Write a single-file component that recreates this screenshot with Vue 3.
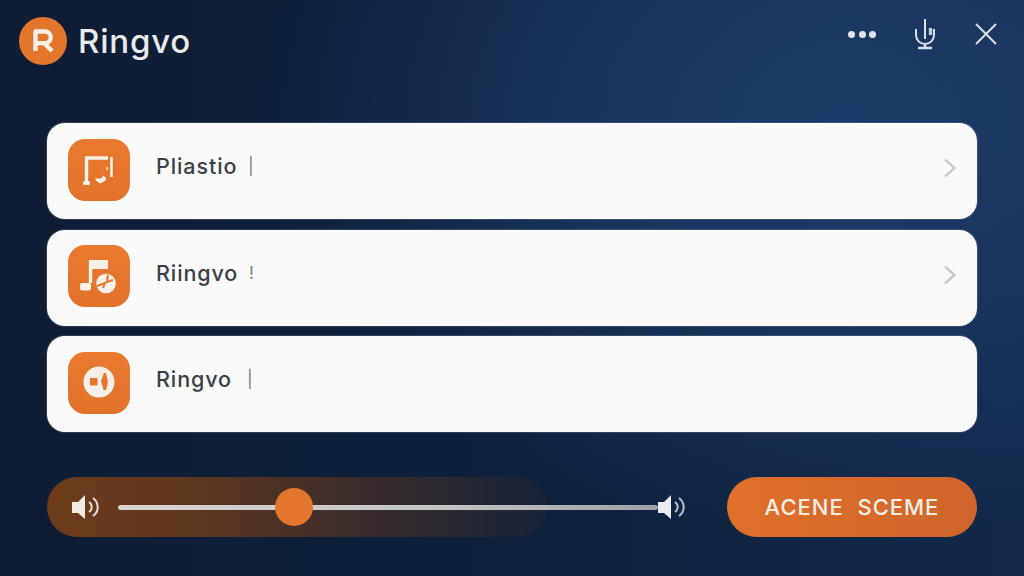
<template>
  <div class="screen">
    <header class="topbar">
      <div class="brand">
        <div class="brand-mark">
          <svg viewBox="0 0 48 48" width="48" height="48" fill="none" stroke="#f7efe8" stroke-width="4.4">
            <path d="M16.500 34V14.500h9.500a5.800 5.800 0 0 1 0 11.600h-9" stroke-linejoin="round" />
            <path d="M25 26l8 8" />
          </svg>
        </div>
        <span class="brand-name">Ringvo</span>
      </div>
      <div class="top-actions">
        <button class="icon-btn dots" aria-label="More">
          <i></i><i></i><i></i>
        </button>
        <button class="icon-btn" aria-label="Microphone">
          <svg viewBox="0 0 24 32" width="24" height="32" fill="none" stroke="#d9e0e8" stroke-width="2">
            <path d="M12 1v20" />
            <path d="M17.500 10v7" stroke-width="3.400" stroke="#c4ccd6" />
            <path d="M3 11v6a9 9 0 0 0 18 0v-6" />
            <path d="M12 26v3M5 30h14" stroke-width="2.400" />
          </svg>
        </button>
        <button class="icon-btn" aria-label="Close">
          <svg viewBox="0 0 24 24" width="24" height="24" stroke="#d9e0e8" stroke-width="2" fill="none">
            <path d="M2 2l20 20M22 2 2 22" />
          </svg>
        </button>
      </div>
    </header>

    <main class="list">
      <div v-for="row in rows" :key="row.id" class="row">
        <div class="row-icon">
          <svg v-if="row.id === 'playlist'" viewBox="0 0 62 62" width="62" height="62" fill="none">
            <path d="M18.500 44V19H40" stroke="#f8f1ea" stroke-width="3.400" />
            <path d="M43.500 18v20" stroke="#f8f1ea" stroke-width="2.600" />
            <rect x="15" y="42" width="7" height="4" rx="1.500" fill="#f8f1ea" />
            <path d="M27 39.500h6l2.500-3 2.500 2.500v2l-3 2-3 1.500-3-2z" fill="#f8f1ea" />
            <rect x="38" y="28" width="2" height="3" fill="#f3c9a8" />
          </svg>
          <svg v-else-if="row.id === 'ringtone'" viewBox="0 0 62 62" width="62" height="62" fill="none">
            <path d="M22.500 38V15" stroke="#f8f1ea" stroke-width="3.400" />
            <path d="M21 15h19v9H21z" fill="#f8f1ea" />
            <rect x="12" y="38" width="11" height="7.500" rx="2" fill="#f8f1ea" />
            <circle cx="38" cy="38.500" r="9.800" fill="#f8f1ea" />
            <path d="M29 41l8-3-2 5M40 30l-1 7 6-2" stroke="#e8762c" stroke-width="2" />
          </svg>
          <svg v-else viewBox="0 0 62 62" width="62" height="62" fill="none">
            <circle cx="31" cy="30" r="15.500" fill="#f6efe9" />
            <rect x="22" y="26" width="7.500" height="7.500" fill="#e8762c" />
            <path d="M33 29l3-8h2l2 9-2 8h-2.500z" fill="#e8762c" />
          </svg>
        </div>
        <span class="row-label">{{ row.label }}</span>
        <span class="row-mark" :style="{ left: row.markX + 'px' }">{{ row.mark }}</span>
        <svg v-if="row.chevron" class="chevron" viewBox="0 0 14 20" width="14" height="20" fill="none" stroke="#c9c9c9" stroke-width="2.400">
          <path d="M2 1.500 11.500 10 2 18.500" />
        </svg>
      </div>
    </main>

    <footer class="controls">
      <div class="volume">
        <svg class="speaker" viewBox="0 0 30 26" width="30" height="26" fill="none">
          <path d="M1 8h6l7-7v24l-7-6H1z" fill="#f1ece7" />
          <path d="M18 8a6 6 0 0 1 0 10M22 4a11 11 0 0 1 0 18" stroke="#e6e0da" stroke-width="2" />
        </svg>
        <div class="track">
          <div class="thumb"></div>
        </div>
        <svg class="speaker speaker-end" viewBox="0 0 30 26" width="30" height="26" fill="none">
          <path d="M1 8h6l7-7v24l-7-6H1z" fill="#e9edf1" />
          <path d="M18 8a6 6 0 0 1 0 10M22 4a11 11 0 0 1 0 18" stroke="#b9c1ca" stroke-width="2" />
        </svg>
      </div>
      <button class="scene-btn">ACENE&nbsp; SCEME</button>
    </footer>
  </div>
</template>

<script setup>
const rows = [
  { id: 'playlist', label: 'Pliastio', mark: '|', markX: 201, chevron: true },
  { id: 'ringtone', label: 'Riingvo', mark: '!', markX: 202, chevron: true },
  { id: 'speaker', label: 'Ringvo', mark: '|', markX: 200, chevron: false }
]
</script>

<style>
html,
body {
  margin: 0;
  background: #0c1a30;
}
</style>

<style scoped>
.screen {
  width: 1024px;
  height: 576px;
  overflow: hidden;
  box-sizing: border-box;
  display: flex;
  flex-direction: column;
  font-family: "Inter", "Liberation Sans", sans-serif;
  background:
    radial-gradient(ellipse 580px 420px at 840px 120px, #1d3a68 0%, rgba(29, 58, 104, 0.7) 45%, rgba(29, 58, 104, 0) 100%),
    linear-gradient(90deg, #0e1d35 0%, #0f213b 50%, #12294a 100%);
}

.topbar {
  height: 81px;
  padding: 0 26px 0 19px;
  display: flex;
  justify-content: space-between;
  align-items: center;
  flex-shrink: 0;
}

.brand {
  display: flex;
  align-items: center;
  gap: 11px;
}

.brand-mark {
  width: 48px;
  height: 48px;
  border-radius: 50%;
  background: #e3762b;
}

.brand-mark svg {
  display: block;
}

.brand-name {
  font-size: 33px;
  font-weight: 500;
  letter-spacing: 0.8px;
  color: #e9ebec;
}

.top-actions {
  display: flex;
  align-items: center;
  gap: 37px;
  margin-top: -13px;
}

.icon-btn {
  background: none;
  border: none;
  padding: 0;
  display: flex;
  align-items: center;
}

.dots {
  gap: 3.5px;
}

.dots i {
  width: 7px;
  height: 7px;
  border-radius: 50%;
  background: #e2e6ea;
}

.list {
  margin-top: 42px;
  padding: 0 47px;
  display: flex;
  flex-direction: column;
  gap: 10.5px;
}

.row {
  position: relative;
  height: 96px;
  box-sizing: border-box;
  padding: 0 20px 3px 21px;
  background: #fafafa;
  border-radius: 18px;
  box-shadow: 0 0 1px 1px rgba(255, 255, 255, 0.15);
  display: flex;
  align-items: center;
}

.row-icon {
  width: 62px;
  height: 62px;
  border-radius: 17px;
  background: linear-gradient(180deg, #e97a2f, #e2712a);
  flex-shrink: 0;
}

.row-icon svg {
  display: block;
}

.row-label {
  margin-left: 26px;
  margin-top: -7px;
  font-size: 21.5px;
  font-weight: 500;
  letter-spacing: 0.9px;
  color: #3b4048;
}

.row-mark {
  position: absolute;
  top: 33px;
  font-size: 17px;
  color: #777b80;
}

.chevron {
  margin-left: auto;
  margin-top: -3px;
}

.controls {
  margin-top: 45px;
  padding: 0 47px;
  display: flex;
  justify-content: space-between;
  align-items: center;
}

.volume {
  position: relative;
  width: 640px;
  height: 60px;
  box-sizing: border-box;
  padding-left: 24px;
  display: flex;
  align-items: center;
}

.volume::before {
  content: "";
  position: absolute;
  left: 0;
  top: 0;
  width: 500px;
  height: 60px;
  border-radius: 30px;
  background: linear-gradient(90deg, #6e3c1a 0%, #5c3620 30%, #3c2d2a 60%, #172338 100%);
}

.speaker {
  position: relative;
  flex-shrink: 0;
}

.track {
  position: relative;
  width: 540px;
  height: 5px;
  margin-left: 17px;
  border-radius: 3px;
  background: linear-gradient(90deg, #d8d5d2, #c2c2c2 60%, #9ea2a8);
}

.thumb {
  position: absolute;
  left: 157px;
  top: -16.5px;
  width: 38px;
  height: 38px;
  border-radius: 50%;
  background: #e3752c;
}

.speaker-end {
  margin-left: -1px;
}

.scene-btn {
  width: 250px;
  height: 60px;
  border: none;
  border-radius: 30px;
  background: linear-gradient(90deg, #e0702a, #cf652c);
  color: #f5efe9;
  font-family: inherit;
  font-size: 22px;
  font-weight: 500;
  letter-spacing: 1px;
}
</style>
